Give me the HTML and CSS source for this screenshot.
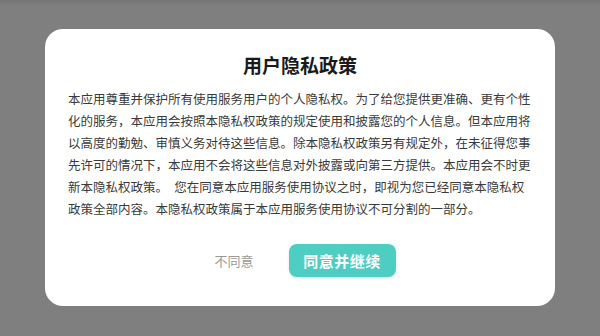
FILE: index.html
```html
<!DOCTYPE html>
<html lang="zh-CN">
<head>
    <meta charset="UTF-8">
    <meta name="viewport" content="width=device-width, initial-scale=1.0">
    <title>用户隐私政策</title>
    <link rel="stylesheet" href="styles.css">
</head>
<body>
    <div class="privacy-dialog">
        <h2 class="privacy-dialog__title">用户隐私政策</h2>
        <p class="privacy-dialog__text">本应用尊重并保护所有使用服务用户的个人隐私权。为了给您提供更准确、更有个性化的服务，本应用会按照本隐私权政策的规定使用和披露您的个人信息。但本应用将以高度的勤勉、审慎义务对待这些信息。除本隐私权政策另有规定外，在未征得您事先许可的情况下，本应用不会将这些信息对外披露或向第三方提供。本应用会不时更新本隐私权政策。　您在同意本应用服务使用协议之时，即视为您已经同意本隐私权政策全部内容。本隐私权政策属于本应用服务使用协议不可分割的一部分。</p>
        <div class="privacy-dialog__actions">
            <button class="btn-decline">不同意</button>
            <button class="btn-accept">同意并继续</button>
        </div>
    </div>
</body>
</html>
```

FILE: styles.css
```css
body {
    font-family: "Noto Sans CJK SC", "Noto Sans", sans-serif;
    margin: 0;
    width: 600px;
    height: 336px;
    background: linear-gradient(#747474, #7f7f7f 6px);
    overflow: hidden;
}

.privacy-dialog {
    box-sizing: border-box;
    width: 510px;
    height: 277px;
    margin: 29px auto 0;
    padding: 23px 23px 0 23px;
    background-color: #fff;
    border-radius: 18px;
}

.privacy-dialog__title {
    margin: 0 0 10px 0;
    font-size: 19px;
    line-height: 26px;
    font-weight: 700;
    color: #1a1a1a;
    text-align: center;
}

.privacy-dialog__text {
    width: 464px;
    margin: 0;
    font-size: 12.5px;
    line-height: 22px;
    color: #3a3a3a;
}

.privacy-dialog__actions {
    display: flex;
    justify-content: center;
    align-items: center;
    gap: 35px;
    margin-top: 24px;
    padding-left: 10px;
}

.btn-decline {
    background: none;
    border: none;
    padding: 0;
    font-family: inherit;
    font-size: 13px;
    color: #999;
    cursor: pointer;
}

.btn-accept {
    width: 107px;
    height: 33px;
    border: none;
    border-radius: 8px;
    background-color: #4ecdc3;
    box-shadow: 0 1px 3px rgba(0, 0, 0, 0.12);
    font-family: inherit;
    font-size: 15px;
    font-weight: 700;
    letter-spacing: 0.5px;
    color: #fff;
    cursor: pointer;
}
```
